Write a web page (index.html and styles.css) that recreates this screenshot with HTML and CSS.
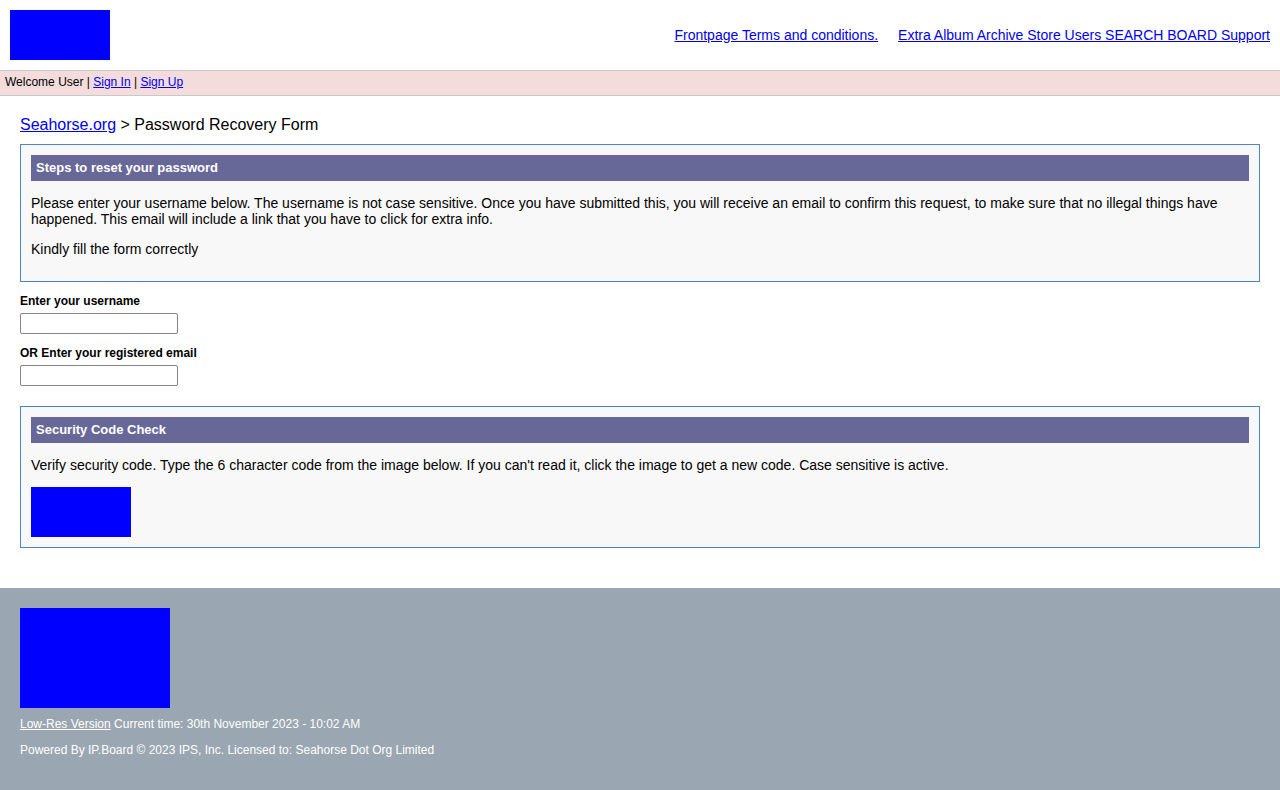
FILE: index.html
```html
<!DOCTYPE html>
<html lang="en">
<head>
<meta charset="utf-8">
<title>Password Recovery Form</title>
<link rel="stylesheet" href="styles.css">
</head>
<body>
<header class="site-header">
  <div class="logo"></div>
  <nav class="top-nav">
    <a href="#">Frontpage Terms and conditions.</a>
    <a href="#">Extra Album Archive Store Users SEARCH BOARD Support</a>
  </nav>
</header>
<div class="user-bar">Welcome User | <a href="#">Sign In</a> | <a href="#">Sign Up</a></div>
<main class="content">
  <div class="breadcrumb"><a href="#">Seahorse.org</a> &gt; Password Recovery Form</div>
  <section class="panel">
    <h2 class="panel-title">Steps to reset your password</h2>
    <p>Please enter your username below. The username is not case sensitive. Once you have submitted this, you will receive an email to confirm this request, to make sure that no illegal things have happened. This email will include a link that you have to click for extra info.</p>
    <p>Kindly fill the form correctly</p>
  </section>
  <form class="recover-form">
    <label class="field-label" for="u">Enter your username</label>
    <input class="field" id="u" type="text">
    <label class="field-label" for="e">OR Enter your registered email</label>
    <input class="field" id="e" type="text">
  </form>
  <section class="panel panel-security">
    <h2 class="panel-title">Security Code Check</h2>
    <p>Verify security code. Type the 6 character code from the image below. If you can't read it, click the image to get a new code. Case sensitive is active.</p>
    <div class="captcha"></div>
  </section>
</main>
<footer class="site-footer">
  <div class="footer-logo"></div>
  <p class="footer-line first"><a href="#">Low-Res Version</a> Current time: 30th November 2023 - 10:02 AM</p>
  <p class="footer-line">Powered By IP.Board © 2023 IPS, Inc. Licensed to: Seahorse Dot Org Limited</p>
</footer>
</body>
</html>
```
FILE: styles.css
```css
html, body {
  margin: 0;
  padding: 0;
}
body {
  font-family: "Liberation Sans", Arial, Helvetica, sans-serif;
  color: #000;
  background: #fff;
}
a { color: #0000ee; }

.site-header {
  display: flex;
  justify-content: space-between;
  align-items: center;
  padding: 10px;
  height: 50px;
}
.logo {
  width: 100px;
  height: 50px;
  background: #0000ff;
}
.top-nav {
  display: flex;
  gap: 20px;
  font-size: 14px;
}

.user-bar {
  background: #f4dcdc;
  border-top: 1px solid #c8c8c8;
  border-bottom: 1px solid #c8c8c8;
  height: 24px;
  line-height: 23px;
  font-size: 12px;
  padding-left: 5px;
}

.content {
  padding: 20px 20px 40px;
}
.breadcrumb {
  font-size: 16px;
  line-height: 18px;
  margin-bottom: 10px;
}

.panel {
  border: 1px solid #4a86c8;
  background: #f8f8f8;
  padding: 10px;
  font-size: 14px;
  line-height: 16px;
}
.panel p {
  margin: 14px 0;
}
.panel-title {
  margin: 0;
  background: #676898;
  color: #fff;
  font-size: 13px;
  font-weight: bold;
  height: 26px;
  line-height: 26px;
  padding-left: 5px;
}

.recover-form {
  display: flex;
  flex-direction: column;
  align-items: flex-start;
  padding-top: 12px;
  padding-bottom: 20px;
}
.field-label {
  font-size: 12px;
  font-weight: bold;
  line-height: 14px;
  margin-bottom: 5px;
}
.field {
  box-sizing: border-box;
  width: 158px;
  height: 21px;
  border: 1px solid #858585;
  border-radius: 2px;
  margin: 0 0 12px;
  padding: 1px 2px;
  background: #fff;
}
.field:last-child { margin-bottom: 0; }

.panel-security p {
  margin: 14px 0;
}
.captcha {
  width: 100px;
  height: 50px;
  background: #0000ff;
}

.site-footer {
  background: #9aa6b1;
  color: #fff;
  padding: 20px 20px 33px;
  font-size: 12px;
  line-height: 14px;
}
.site-footer a { color: #fff; }
.footer-logo {
  width: 150px;
  height: 100px;
  background: #0000ff;
}
.footer-line {
  margin: 12px 0 0;
}
.footer-line.first {
  margin-top: 9px;
}
```
